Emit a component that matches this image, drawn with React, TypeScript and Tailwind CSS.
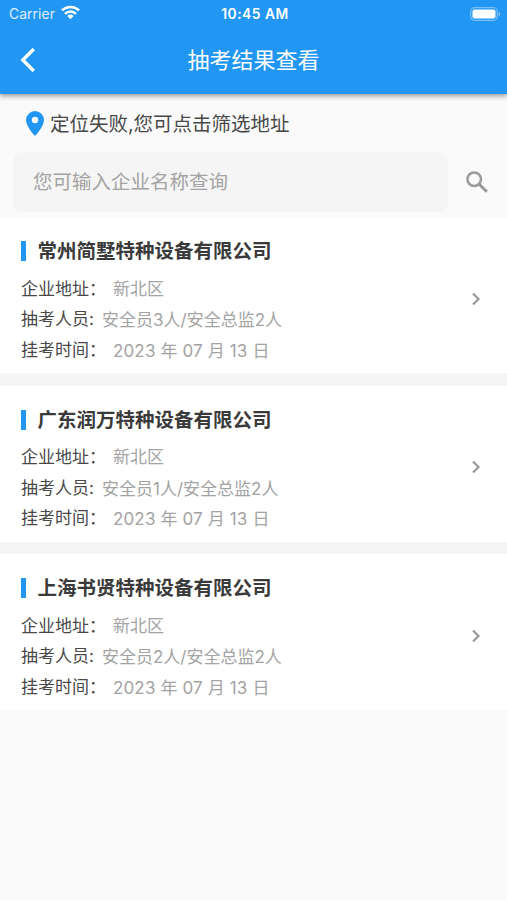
type Exam = { name: string; district: string; people: string; date: string };

const exams: Exam[] = [
  { name: '常州简墅特种设备有限公司', district: '新北区', people: '安全员3人/安全总监2人', date: '2023 年 07 月 13 日' },
  { name: '广东润万特种设备有限公司', district: '新北区', people: '安全员1人/安全总监2人', date: '2023 年 07 月 13 日' },
  { name: '上海书贤特种设备有限公司', district: '新北区', people: '安全员2人/安全总监2人', date: '2023 年 07 月 13 日' },
];

function StatusBar() {
  return (
    <div className="grid h-7 grid-cols-3 items-center pl-[9px] pr-[6px] text-[13px] leading-none">
      <div className="flex items-center gap-[6px] text-white/85">
        <span className="pt-[1px] text-[13.8px] tracking-[0.1px]">Carrier</span>
        <svg width="19" height="15" viewBox="0 0 19 15" className="-mt-[2px]" fill="none" stroke="#fff" strokeWidth="2.6">
          <path d="M1 5.4C5.7.8 13.3.8 18 5.4" />
          <path d="M4 8.8c3.1-3.1 7.9-3.1 11 0" />
          <path d="M6.3 10.9a4.500 4.500 0 0 1 6.400 0L9.5 14.200z" fill="#fff" stroke="none" />
        </svg>
      </div>
      <span className="pt-[2px] text-center text-[13.8px] font-semibold tracking-[0.5px]">10:45 AM</span>
      <svg width="31" height="14" viewBox="0 0 31 14" className="-mt-[1px] justify-self-end">
        <rect x=".7" y=".7" width="26.6" height="12.6" rx="3.8" fill="none" stroke="#fff" strokeOpacity=".4" strokeWidth="1.2" />
        <rect x="2.5" y="2.5" width="23" height="9" rx="2" fill="#fff" />
        <path d="M28.6 4.7c2.2.8 2.2 3.8 0 4.6z" fill="#fff" fillOpacity=".45" />
      </svg>
    </div>
  );
}

function ExamCard({ exam }: { exam: Exam }) {
  return (
    <article className="flex h-[156px] items-center justify-between bg-white pl-[21px] pr-[26px]">
      <div className="h-full pt-[20px]">
        <div className="flex h-[28px] items-center gap-[11.500px]">
          <span className="h-[20px] w-[5px] bg-[#2196f3]" />
          <h2 className="whitespace-nowrap text-[19.5px] font-bold leading-[28px] text-[#3a3a3a]">{exam.name}</h2>
        </div>
        <dl className="mt-[8.600px] whitespace-nowrap text-[17px] leading-[30.6px]">
          <div className="flex h-[30.6px]">
            <dt className="w-[92px] text-[#484848]">企业地址：</dt>
            <dd className="text-[#a3a3a3]">{exam.district}</dd>
          </div>
          <div className="flex h-[30.6px]">
            <dt className="w-[81px] text-[#484848]">抽考人员:</dt>
            <dd className="pt-[1px] text-[#a3a3a3]">{exam.people}</dd>
          </div>
          <div className="flex h-[30.6px]">
            <dt className="w-[92px] text-[#484848]">挂考时间：</dt>
            <dd className="pt-[1px] tracking-[0.14px] text-[#a3a3a3]">{exam.date}</dd>
          </div>
        </dl>
      </div>
      <svg width="10" height="14" viewBox="0 0 10 14" className="mt-[7px]" fill="none" stroke="#999" strokeWidth="2.2">
        <path d="M2 1.5 7.5 7 2 12.5" />
      </svg>
    </article>
  );
}

export default function App() {
  return (
    <div lang="zh-CN" className="flex min-h-[900px] w-full flex-col bg-[#fafafa] font-['Inter','Noto_Sans_CJK_SC',sans-serif]">
      <header className="relative h-[94px] bg-[#2196f3] text-white shadow-[0_2px_5px_rgba(0,0,0,0.4)]">
        <StatusBar />
        <div className="grid h-[64px] grid-cols-[60px_1fr_60px] items-center">
          <svg width="16" height="24" viewBox="0 0 16 24" className="ml-[20px]" fill="none" stroke="#fff" strokeWidth="3.4">
            <path d="M13.8 1 2.8 12l11 11" />
          </svg>
          <h1 className="text-center text-[22px] leading-8">抽考结果查看</h1>
        </div>
      </header>

      <section className="flex h-[123px] flex-col">
        <div className="flex h-[58px] items-center gap-[6px] pl-[26px]">
          <svg width="18" height="25" viewBox="0 0 18 25" fill="#2196f3">
            <path fillRule="evenodd" d="M9 0a9 9 0 0 0-9 9c0 6.6 9 16 9 16s9-9.400 9-16a9 9 0 0 0-9-9Zm0 5.800a3.200 3.200 0 1 1 0 6.400 3.200 3.200 0 0 1 0-6.400Z" />
          </svg>
          <span className="pt-[2px] text-[19.5px] leading-7 text-[#484848]">定位失败,您可点击筛选地址</span>
        </div>
        <div className="flex h-[60px] items-center justify-between pl-[13px] pr-[19px]">
          <div className="flex h-full w-[435px] items-center rounded-[10px] bg-[#f5f5f5] pl-[20px] pt-[2px] text-[19.5px] text-[#a3a3a3]">
            您可输入企业名称查询
          </div>
          <svg width="22" height="22" viewBox="0 0 22 22" fill="none" stroke="#999" strokeWidth="2.500">
            <circle cx="8.200" cy="8.200" r="6.800" />
            <path d="m13 13 7.800 7.800" strokeWidth="3" />
          </svg>
        </div>
      </section>

      <main className="flex flex-col gap-[12.600px] bg-[#f5f5f5]">
        {exams.map((exam) => (
          <ExamCard key={exam.name} exam={exam} />
        ))}
      </main>
    </div>
  );
}
